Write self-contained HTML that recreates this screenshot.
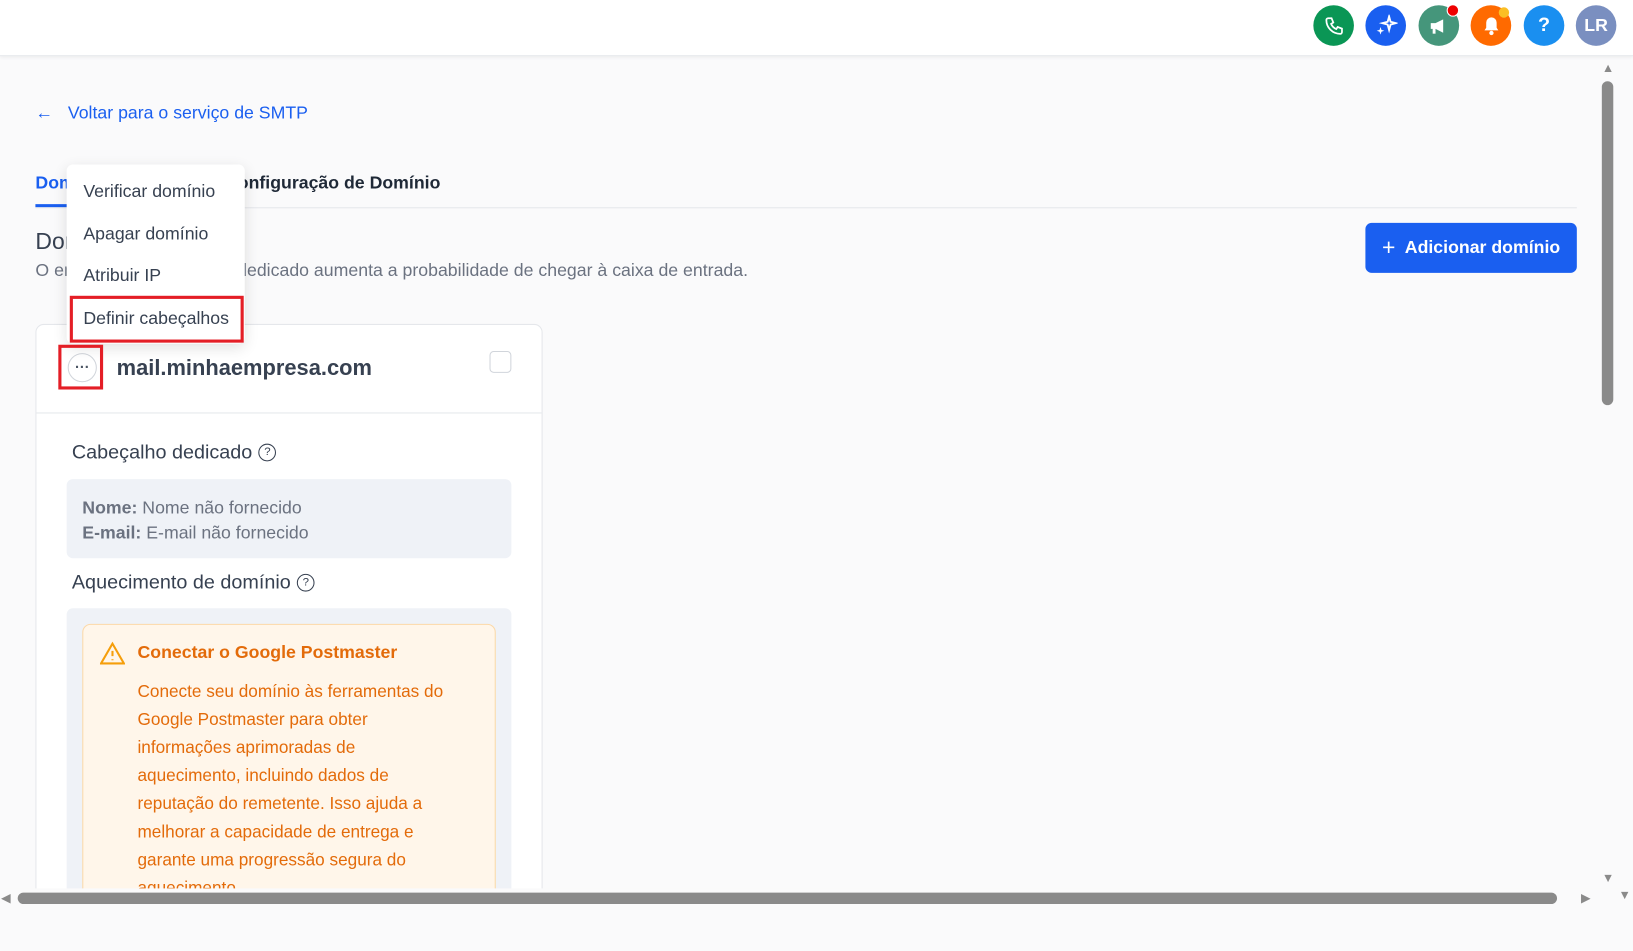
<!DOCTYPE html>
<html><head><meta charset="utf-8"><style>
*{box-sizing:border-box;margin:0;padding:0}
body{width:1633px;height:906px;overflow:hidden;background:#fafafb;font-family:"Liberation Sans",sans-serif;position:relative;color:#1f2937}
#w{position:absolute;left:0;top:0;width:1568px;height:870px;transform:scale(1.0415);transform-origin:0 0}
.hdr{position:absolute;left:0;top:0;width:1568px;height:54px;background:#fff;border-bottom:1px solid #e5e7eb;box-shadow:0 1px 3px rgba(0,0,0,.06)}
.ic{position:absolute;top:5px;width:39px;height:39px;border-radius:50%;display:flex;align-items:center;justify-content:center;color:#fff;font-weight:bold;font-size:19px}
.a{position:absolute;white-space:nowrap}
.card{position:absolute;left:34px;top:311px;width:487px;height:560px;background:#fff;border:1px solid #e5e7eb;border-radius:8px}
.menu{position:absolute;left:64px;top:158px;width:171px;height:172px;background:#fff;border-radius:6px;box-shadow:0 4px 14px rgba(0,0,0,.12)}
.mi{position:absolute;left:16px;font-size:17px;color:#374151}
.q{display:inline-block;width:17px;height:17px;border:1.5px solid #374151;border-radius:50%;font-size:11px;text-align:center;line-height:14px;vertical-align:middle;margin-left:6px}
</style></head><body><div id="w">
<div class="hdr">
<div class="ic" style="left:1261px;background:#0a9655"><svg width="20" height="20" viewBox="0 0 24 24" fill="none" stroke="#fff" stroke-width="2"><path d="M5 3h4l2 5-2.5 1.5a11 11 0 0 0 6 6L16 13l5 2v4a2 2 0 0 1-2 2A16 16 0 0 1 3 5a2 2 0 0 1 2-2z"/></svg></div>
<div class="ic" style="left:1311px;background:#1a5ff0"><svg width="22" height="22" viewBox="0 0 24 24" fill="#fff"><path d="M15 2l1.5 5.5L22 9l-5.5 1.5L15 16l-1.5-5.5L8 9l5.5-1.5z" fill="none" stroke="#fff" stroke-width="2"/><path d="M6 13l1 3 3 1-3 1-1 3-1-3-3-1 3-1z"/></svg></div>
<div class="ic" style="left:1362px;background:#45967b"><svg width="22" height="22" viewBox="0 0 24 24" fill="#fff"><path d="M3 9h5l8-4v14l-8-4H3z"/><rect x="5" y="14" width="3" height="6"/></svg></div>
<div style="position:absolute;left:1389px;top:4px;width:12px;height:12px;border-radius:50%;background:#e00;border:1.5px solid #fff"></div>
<div class="ic" style="left:1412px;background:#ff6a00"><svg width="20" height="22" viewBox="0 0 24 24" fill="#fff"><path d="M12 2a6 6 0 0 0-6 6v6l-2 3h16l-2-3V8a6 6 0 0 0-6-6z"/><circle cx="12" cy="20" r="2.5"/></svg></div>
<div style="position:absolute;left:1439px;top:7px;width:10px;height:10px;border-radius:50%;background:#fbbf24"></div>
<div class="ic" style="left:1463px;background:#1a8ff0">?</div>
<div class="ic" style="left:1513px;background:#7a8fc0;font-size:17px">LR</div>
</div>
<div class="a" style="left:34px;top:99px;font-size:17px;color:#1a5ff0">←&nbsp;&nbsp; Voltar para o serviço de SMTP</div>
<div class="a" style="left:34px;top:166px;font-size:17px;color:#1a5ff0;font-weight:bold">Domínios</div>
<div style="position:absolute;left:34px;top:196px;width:60px;height:3px;background:#1a5ff0"></div>
<div class="a" style="left:216px;top:166px;font-size:17px;font-weight:bold;color:#1f2937">Configuração de Domínio</div>
<div style="position:absolute;left:34px;top:199px;width:1480px;height:1px;background:#e5e7eb"></div>
<div class="a" style="left:34px;top:219px;font-size:22px;color:#374151">Domínios</div>
<div class="a" style="left:34px;top:250px;font-size:17px;color:#6b7280">O envio com um domínio dedicado aumenta a probabilidade de chegar à caixa de entrada.</div>
<div style="position:absolute;left:1311px;top:214px;width:203px;height:48px;background:#1a5ff0;border-radius:6px;color:#fff;font-weight:bold;font-size:17px;display:flex;align-items:center;justify-content:center"><span style="font-size:22px;font-weight:normal;margin-right:9px">+</span>Adicionar domínio</div>
<div class="card">
<div style="position:absolute;left:0;top:84px;width:100%;height:1px;background:#e5e7eb"></div>
<div style="position:absolute;left:30px;top:27px;width:28px;height:28px;border:1px solid #d1d5db;border-radius:50%;text-align:center;font-size:14px;line-height:24px;color:#4b5563;font-weight:bold">···</div>
<div class="a" style="left:77px;top:30px;font-size:21px;font-weight:bold;color:#374151">mail.minhaempresa.com</div>
<div style="position:absolute;left:435px;top:25px;width:21px;height:21px;border:1.5px solid #d1d5db;border-radius:4px"></div>
<div class="a" style="left:34px;top:112px;font-size:19px;color:#374151">Cabeçalho dedicado<span class="q">?</span></div>
<div style="position:absolute;left:29px;top:148px;width:427px;height:76px;background:#eff2f7;border-radius:6px"></div>
<div class="a" style="left:44px;top:164px;font-size:17px;color:#6b7280;line-height:24px"><b style="color:#6b7280">Nome:</b> Nome não fornecido<br><b>E-mail:</b> E-mail não fornecido</div>
<div class="a" style="left:34px;top:237px;font-size:19px;color:#374151">Aquecimento de domínio<span class="q">?</span></div>
<div style="position:absolute;left:29px;top:272px;width:427px;height:300px;background:#eff2f7;border-radius:6px"></div>
<div style="position:absolute;left:44px;top:287px;width:397px;height:300px;background:#fff6ea;border:1px solid #fcd9a8;border-radius:8px;color:#e36b0a">
<svg style="position:absolute;left:16px;top:16px" width="24" height="22" viewBox="0 0 24 22" fill="none" stroke="#f59e0b" stroke-width="2"><path d="M12 2L1 21h22z"/><path d="M12 9v5M12 17v1"/></svg>
<div class="a" style="left:52px;top:17px;font-size:17px;font-weight:bold">Conectar o Google Postmaster</div>
<div style="position:absolute;left:52px;top:51px;width:300px;font-size:16.5px;line-height:27px">Conecte seu domínio às ferramentas do Google Postmaster para obter informações aprimoradas de aquecimento, incluindo dados de reputação do remetente. Isso ajuda a melhorar a capacidade de entrega e garante uma progressão segura do aquecimento.</div>
</div>
</div>
<div style="position:absolute;left:0;top:853px;width:1568px;height:60px;background:#fafafb"></div>
<div class="menu">
<div class="mi" style="top:16px">Verificar domínio</div>
<div class="mi" style="top:57px">Apagar domínio</div>
<div class="mi" style="top:97px">Atribuir IP</div>
<div class="mi" style="top:138px">Definir cabeçalhos</div>
</div>
<div style="position:absolute;left:67px;top:284px;width:167px;height:45px;border:3px solid #e41e26"></div>
<div style="position:absolute;left:56px;top:331px;width:43px;height:43px;border:3px solid #e41e26"></div>
<div style="position:absolute;left:1538px;top:78px;width:11px;height:311px;background:#8a8a8a;border-radius:6px"></div>
<div class="a" style="left:1538px;top:58px;font-size:12px;color:#8a8a8a">▲</div>
<div class="a" style="left:1538px;top:836px;font-size:12px;color:#8a8a8a">▼</div>
<div style="position:absolute;left:17px;top:857px;width:1478px;height:11px;background:#8a8a8a;border-radius:6px"></div>
<div class="a" style="left:1px;top:855px;font-size:12px;color:#8a8a8a">◀</div>
<div class="a" style="left:1518px;top:855px;font-size:12px;color:#8a8a8a">▶</div>
<div class="a" style="left:1554px;top:852px;font-size:12px;color:#8a8a8a">▼</div>
</div></body></html>
